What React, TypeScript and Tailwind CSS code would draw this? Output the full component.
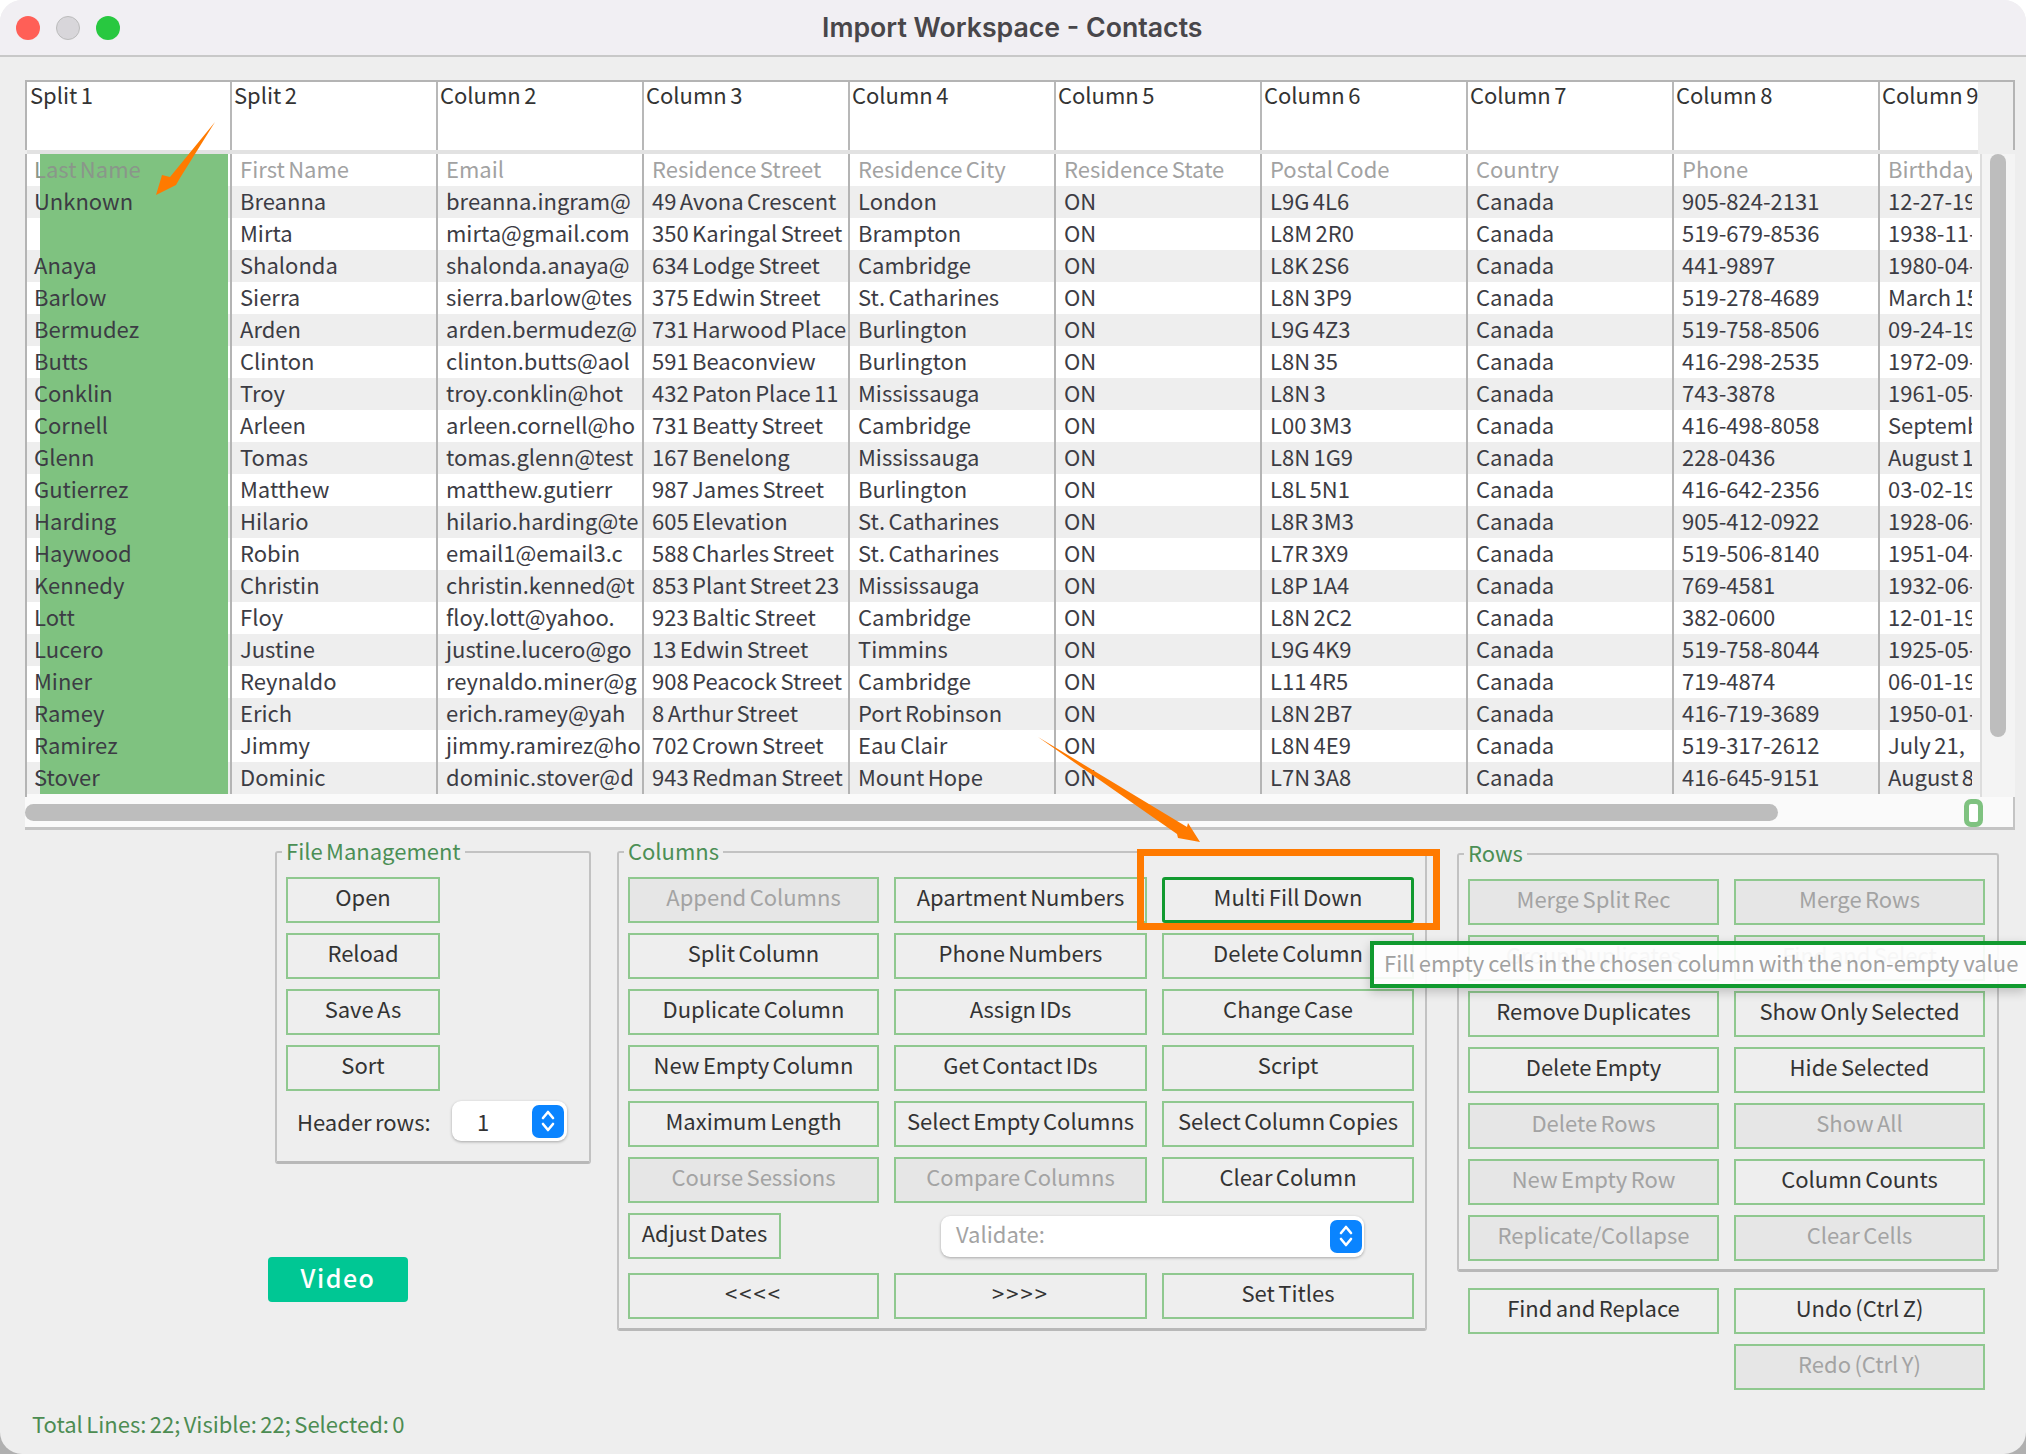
import React from 'react';

const font = { fontFamily: '"Noto Sans CJK SC", "Noto Sans", sans-serif' };

const headers = ['Split 1', 'Split 2', 'Column 2', 'Column 3', 'Column 4', 'Column 5', 'Column 6', 'Column 7', 'Column 8', 'Column 9'];

const titleRow = ['Last Name', 'First Name', 'Email', 'Residence Street', 'Residence City', 'Residence State', 'Postal Code', 'Country', 'Phone', 'Birthday'];

const rows = [
  ['Unknown', 'Breanna', 'breanna.ingram@', '49 Avona Crescent', 'London', 'ON', 'L9G 4L6', 'Canada', '905-824-2131', '12-27-19'],
  ['', 'Mirta', 'mirta@gmail.com', '350 Karingal Street', 'Brampton', 'ON', 'L8M 2R0', 'Canada', '519-679-8536', '1938-11-'],
  ['Anaya', 'Shalonda', 'shalonda.anaya@', '634 Lodge Street', 'Cambridge', 'ON', 'L8K 2S6', 'Canada', '441-9897', '1980-04-'],
  ['Barlow', 'Sierra', 'sierra.barlow@tes', '375 Edwin Street', 'St. Catharines', 'ON', 'L8N 3P9', 'Canada', '519-278-4689', 'March 15'],
  ['Bermudez', 'Arden', 'arden.bermudez@', '731 Harwood Place', 'Burlington', 'ON', 'L9G 4Z3', 'Canada', '519-758-8506', '09-24-19'],
  ['Butts', 'Clinton', 'clinton.butts@aol', '591 Beaconview', 'Burlington', 'ON', 'L8N 35', 'Canada', '416-298-2535', '1972-09-'],
  ['Conklin', 'Troy', 'troy.conklin@hot', '432 Paton Place 11', 'Mississauga', 'ON', 'L8N 3', 'Canada', '743-3878', '1961-05-'],
  ['Cornell', 'Arleen', 'arleen.cornell@ho', '731 Beatty Street', 'Cambridge', 'ON', 'L00 3M3', 'Canada', '416-498-8058', 'Septemb'],
  ['Glenn', 'Tomas', 'tomas.glenn@test', '167 Benelong', 'Mississauga', 'ON', 'L8N 1G9', 'Canada', '228-0436', 'August 1'],
  ['Gutierrez', 'Matthew', 'matthew.gutierr', '987 James Street', 'Burlington', 'ON', 'L8L 5N1', 'Canada', '416-642-2356', '03-02-19'],
  ['Harding', 'Hilario', 'hilario.harding@te', '605 Elevation', 'St. Catharines', 'ON', 'L8R 3M3', 'Canada', '905-412-0922', '1928-06-'],
  ['Haywood', 'Robin', 'email1@email3.c', '588 Charles Street', 'St. Catharines', 'ON', 'L7R 3X9', 'Canada', '519-506-8140', '1951-04-'],
  ['Kennedy', 'Christin', 'christin.kenned@t', '853 Plant Street 23', 'Mississauga', 'ON', 'L8P 1A4', 'Canada', '769-4581', '1932-06-'],
  ['Lott', 'Floy', 'floy.lott@yahoo.', '923 Baltic Street', 'Cambridge', 'ON', 'L8N 2C2', 'Canada', '382-0600', '12-01-19'],
  ['Lucero', 'Justine', 'justine.lucero@go', '13 Edwin Street', 'Timmins', 'ON', 'L9G 4K9', 'Canada', '519-758-8044', '1925-05-'],
  ['Miner', 'Reynaldo', 'reynaldo.miner@g', '908 Peacock Street', 'Cambridge', 'ON', 'L11 4R5', 'Canada', '719-4874', '06-01-19'],
  ['Ramey', 'Erich', 'erich.ramey@yah', '8 Arthur Street', 'Port Robinson', 'ON', 'L8N 2B7', 'Canada', '416-719-3689', '1950-01-'],
  ['Ramirez', 'Jimmy', 'jimmy.ramirez@ho', '702 Crown Street', 'Eau Clair', 'ON', 'L8N 4E9', 'Canada', '519-317-2612', 'July 21,'],
  ['Stover', 'Dominic', 'dominic.stover@d', '943 Redman Street', 'Mount Hope', 'ON', 'L7N 3A8', 'Canada', '416-645-9151', 'August 8'],
];

function cellWidth(i: number) {
  if (i === 0) return 'w-[205px] border-r-2 pl-[7px]';
  if (i === 9) return 'w-[92px] overflow-hidden pl-[8px]';
  return 'w-[206px] border-r-2 pl-[8px]';
}

const Row = ({ cells, striped, muted }: { cells: string[]; striped: boolean; muted?: boolean }) => (
  <div className={`flex h-[32px] ${striped ? 'bg-[#eeeeee]' : 'bg-white'}`}>
    {cells.map((text, i) => (
      <div
        key={i}
        className={`relative shrink-0 whitespace-nowrap border-[#b4b4b4] text-[22px] leading-[28px] ${cellWidth(i)} ${muted ? (i === 0 ? 'text-[#8a968a]' : 'text-[#a2a2a2]') : 'text-[#3c3c44]'}`}
      >
        {/* selected column highlight sits under the text */}
        {i === 0 && <span className="absolute inset-y-0 left-[13px] right-[2px] bg-[#7fc280]" />}
        <span className="relative">{text}</span>
      </div>
    ))}
  </div>
);

const Btn = ({ label, off, className = '' }: { label: string; off?: boolean; className?: string }) => (
  <div
    className={`flex h-[46px] items-center justify-center border-2 border-[#8fc88f] pb-[7px] text-[22px] whitespace-nowrap ${off ? 'bg-[#e6e6e6] text-[#a3a3a3]' : 'text-[#333333]'} ${className}`}
  >
    {label}
  </div>
);

const Group = ({ title, className, children }: { title: string; className: string; children: React.ReactNode }) => (
  <div className={`relative rounded-[3px] border-2 border-b-[3px] border-[#c2c2c2] border-b-[#b8b8b8] ${className}`}>
    <span className="absolute left-[5px] top-[-20px] bg-[#eeeeee] px-[4px] text-[22px] leading-[34px] text-[#4b8f55]">{title}</span>
    {children}
  </div>
);

const Stepper = ({ className }: { className: string }) => (
  <div className={`flex items-center justify-center rounded-[7px] bg-[#0a84ff] ${className}`}>
    <svg width="16" height="26" viewBox="0 0 16 26" fill="none" stroke="white" strokeWidth="2.6" strokeLinecap="round" strokeLinejoin="round">
      <path d="M3 10 L8 4 L13 10" />
      <path d="M3 16 L8 22 L13 16" />
    </svg>
  </div>
);

export default function App() {
  return (
    <div
      className="relative h-[1454px] w-[2026px] overflow-hidden bg-gradient-to-b from-white from-50% to-[#b0b0b0] to-50% [word-spacing:-1.5px]"
      style={font}
    >
      <div className="relative flex h-full flex-col overflow-hidden rounded-[22px] bg-[#eeeeee]">
        {/* title bar */}
        <div className="flex h-[57px] shrink-0 items-center border-b-2 border-[#c8c8c8] bg-[#f1eff3] pl-[16px]">
          <div className="flex gap-[16px]">
            <span className="h-[24px] w-[24px] rounded-full bg-[#ff5f57]" />
            <span className="h-[24px] w-[24px] rounded-full border border-[#bbbbbb] bg-[#d8d6da]" />
            <span className="h-[24px] w-[24px] rounded-full bg-[#28c840]" />
          </div>
          <div className="ml-[702px] text-[26.7px] font-semibold text-[#48464a] [word-spacing:0]" style={{ fontFamily: 'Inter, sans-serif' }}>
            Import Workspace - Contacts
          </div>
        </div>

        {/* table */}
        <div className="ml-[25px] mt-[23px] w-[1990px]">
          <div className="flex h-[70px] border-x-2 border-t-2 border-[#b4b4b4]">
            {headers.map((h, i) => (
              <div
                key={h}
                className={`shrink-0 whitespace-nowrap border-[#b8b8b8] bg-white text-[22px] leading-[24px] text-[#333333] ${i === 0 ? 'w-[205px] border-r-2 pl-[3px]' : i === 9 ? 'w-[98px] overflow-hidden pl-[2px]' : 'w-[206px] border-r-2 pl-[2px]'}`}
              >
                {h}
              </div>
            ))}
          </div>
          <div className="ml-[2px] h-[4px] w-[1951px] bg-[#e2e2e2]" />
          <div className="flex h-[643px]">
            <div className="h-full w-[1957px] border-x-2 border-l-[#b4b4b4] border-r-[#dddddd] bg-[#fafafa]">
              <Row cells={titleRow} striped={false} muted />
              {rows.map((r, i) => (
                <Row key={r[1]} cells={r} striped={i % 2 === 0} />
              ))}
            </div>
            <div className="flex-1 bg-[#f4f4f4] pl-[8px]">
              <div className="h-[583px] w-[16px] rounded-full bg-[#bdbdbd]" />
            </div>
          </div>
          <div className="flex h-[33px] items-center border-b-[3px] border-r-2 border-[#c4c4c4] bg-[#fafafa]">
            <div className="h-[17px] w-[1753px] rounded-full bg-[#bdbdbd]" />
            <div className="ml-[186px] mt-[2px] h-[28px] w-[19px] rounded-[7px] border-[5px] border-[#7fc280] bg-white" />
          </div>
        </div>

        {/* lower panels */}
        <div className="flex items-start pl-[268px] pt-[21px]">
          <div className="w-[323px] shrink-0">
            <Group title="File Management" className="ml-[7px] h-[313px] w-[316px] pl-[9px] pt-[24px]">
              <div className="flex w-[154px] flex-col gap-[10px]">
                <Btn label="Open" />
                <Btn label="Reload" />
                <Btn label="Save As" />
                <Btn label="Sort" />
              </div>
              <div className="ml-[11px] mt-[10px] flex items-center">
                <span className="w-[155px] text-[22px] text-[#333333]">Header rows:</span>
                <div className="flex h-[40px] w-[115px] items-center justify-between rounded-[9px] bg-white pl-[25px] pr-[3px] text-[22px] text-[#333333] shadow-[0_1px_3px_rgba(0,0,0,0.3)]">
                  1
                  <Stepper className="h-[33px] w-[32px]" />
                </div>
              </div>
            </Group>
            <div className="mt-[93px] flex h-[45px] w-[140px] items-center justify-center rounded-[4px] bg-[#00c794] pb-[3px] text-[25px] font-medium tracking-[1.5px] text-white">
              Video
            </div>
          </div>

          <Group title="Columns" className="ml-[26px] h-[480px] w-[810px] shrink-0 pl-[9px] pt-[24px]">
            <div className="grid grid-cols-[251px_253px_252px] gap-x-[15px] gap-y-[10px]">
              <Btn label="Append Columns" off />
              <Btn label="Apartment Numbers" />
              <Btn label="Multi Fill Down" className="rounded-[3px] border-[3px] border-[#119a2f]" />
              <Btn label="Split Column" />
              <Btn label="Phone Numbers" />
              <Btn label="Delete Column" />
              <Btn label="Duplicate Column" />
              <Btn label="Assign IDs" />
              <Btn label="Change Case" />
              <Btn label="New Empty Column" />
              <Btn label="Get Contact IDs" />
              <Btn label="Script" />
              <Btn label="Maximum Length" />
              <Btn label="Select Empty Columns" />
              <Btn label="Select Column Copies" />
              <Btn label="Course Sessions" off />
              <Btn label="Compare Columns" off />
              <Btn label="Clear Column" />
              <div className="col-span-3 flex items-center">
                <Btn label="Adjust Dates" className="w-[153px]" />
                <div className="ml-[160px] flex h-[41px] w-[423px] items-center justify-between rounded-[9px] bg-white pl-[15px] pr-[2px] text-[22px] text-[#a3a3a3] shadow-[0_1px_3px_rgba(0,0,0,0.3)]">
                  <span className="pb-[6px]">Validate:</span>
                  <Stepper className="h-[33px] w-[32px]" />
                </div>
              </div>
              <Btn label="<<<<" className="mt-[4px] tracking-[2px]" />
              <Btn label=">>>>" className="mt-[4px] tracking-[2px]" />
              <Btn label="Set Titles" className="mt-[4px]" />
            </div>
          </Group>

          <div className="ml-[30px] mt-[2px] w-[542px] shrink-0">
            <Group title="Rows" className="h-[419px] pl-[9px] pt-[24px]">
              <div className="grid grid-cols-[251px_251px] gap-x-[15px] gap-y-[10px]">
                <Btn label="Merge Split Rec" off />
                <Btn label="Merge Rows" off />
                <Btn label="Group Duplicates" off />
                <Btn label="Find and Select" off />
                <Btn label="Remove Duplicates" />
                <Btn label="Show Only Selected" />
                <Btn label="Delete Empty" />
                <Btn label="Hide Selected" />
                <Btn label="Delete Rows" off />
                <Btn label="Show All" off />
                <Btn label="New Empty Row" off />
                <Btn label="Column Counts" />
                <Btn label="Replicate/Collapse" off />
                <Btn label="Clear Cells" off />
              </div>
            </Group>
            <div className="ml-[11px] mt-[16px] grid grid-cols-[251px_251px] gap-x-[15px] gap-y-[10px]">
              <Btn label="Find and Replace" />
              <Btn label="Undo (Ctrl Z)" />
              <Btn label="Redo (Ctrl Y)" off className="col-start-2" />
            </div>
          </div>
        </div>

        <div className="mt-auto pb-[15px] pl-[32px] text-[22px] leading-[32px] text-[#4c8c52]">
          Total Lines: 22; Visible: 22; Selected: 0
        </div>

        {/* tooltip over the buttons */}
        <div className="absolute left-[1370px] right-0 top-[941px] flex h-[47px] items-center border-y-[4px] border-l-[4px] border-[#119a2f] bg-white/90 pb-[5px] pl-[10px] text-[22px] whitespace-nowrap text-[#a0a0a0] shadow-[0_4px_10px_rgba(0,0,0,0.2)] [word-spacing:-0.9px]">
          Fill empty cells in the chosen column with the non-empty value
        </div>

        {/* annotation marks on top of the screenshot */}
        <div className="absolute left-[1137px] top-[849px] h-[81px] w-[303px] border-[7px] border-[#ff7a00]" />
        <svg className="pointer-events-none absolute left-0 top-0" width="2026" height="1454" viewBox="0 0 2026 1454">
          <polygon points="215,122 180,178 176,185 156,195 162,175 170,177" fill="#ff7a00" />
          <polygon points="1038,737 1187,827 1188,823 1200,842 1178,838 1177,834" fill="#ff7a00" />
        </svg>
      </div>
    </div>
  );
}
